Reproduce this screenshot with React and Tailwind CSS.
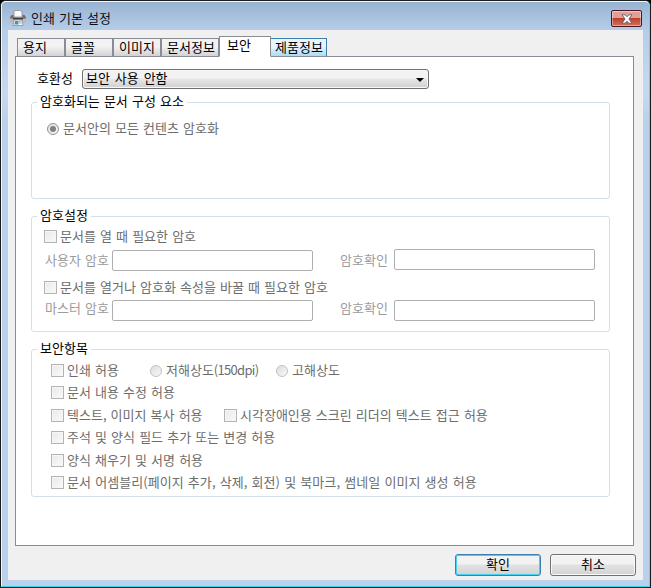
import { useState } from 'react';
import clsx from 'clsx';

const TABS = [
  { label: '용지', width: 'w-[48px]' },
  { label: '글꼴', width: 'w-[48px]' },
  { label: '이미지', width: 'w-[48px]' },
  { label: '문서정보', width: 'w-[58px]' },
  { label: '보안', width: 'w-[52px]' },
  { label: '제품정보', width: 'w-[57px]' },
];

function PrinterIcon() {
  return (
    <svg width="16" height="16" viewBox="0 0 16 16">
      <path d="M4.500 .5h6l1.500 1.500V7H4V.5z" fill="#fafafa" stroke="#8b8b8b" strokeWidth=".8" />
      <path d="M1.500 5h2v2.500h9V5h2L16 7.500v3H0v-3z" fill="#6c6c6c" />
      <path d="M0 8.500h16v4H0z" fill="#b9b9b9" />
      <path d="M3 8h10v1.500H3z" fill="#3c3c3c" />
      <path d="M4 10h8l1 5.500H3z" fill="#f9f9f9" stroke="#858585" strokeWidth=".7" />
      <path d="M5 11h3.500v3.500H4.500z" fill="#4b93ab" />
      <path d="M9 11.500h2.500M9 13h2.700" stroke="#7fa7b5" strokeWidth=".8" />
    </svg>
  );
}

function CloseButton() {
  return (
    <button
      type="button"
      className="flex h-[17px] w-[31px] items-center justify-center rounded-[2px] border border-[#4b1620] bg-linear-to-b from-[#dfa097] from-45% via-[#bc3f2b] via-50% to-[#d4705e] shadow-[inset_0_0_0_1px_rgba(255,255,255,0.4)]"
    >
      <svg width="12" height="10" viewBox="0 0 12 10">
        <path
          d="M1 .8h3.200L6 2.800 7.800.8H11L7.900 5 11 9.200H7.800L6 7.200 4.200 9.200H1L4.100 5z"
          fill="#fff"
          stroke="#5c5f70"
          strokeWidth=".9"
        />
      </svg>
    </button>
  );
}

function Group({ title, className, children }) {
  return (
    <section className={clsx('w-[579px] rounded-[3px] border border-[#d5dfe5]', className)}>
      <h2 className="-mt-[9px] ml-[5px] h-4 w-fit bg-white px-[3px] leading-[14px] text-black">{title}</h2>
      {children}
    </section>
  );
}

function Check({ label, className }) {
  return (
    <label className={clsx('flex h-[13px] items-center gap-[3px] text-[#6d6d6d]', className)}>
      <span className="size-[13px] shrink-0 border border-[#b4b4b4] bg-linear-to-br from-[#e9e9e9] to-[#fafafa] shadow-[inset_0_0_0_1px_#f6f6f6]" />
      <span className="-mt-[2px]">{label}</span>
    </label>
  );
}

function Radio({ label, checked, className }) {
  return (
    <label className={clsx('flex h-[13px] items-center gap-1 text-[#6d6d6d]', className)}>
      <span
        className={clsx(
          'flex size-[12px] shrink-0 items-center justify-center rounded-full border bg-linear-to-br from-[#dedede] to-[#f8f8f8]',
          checked ? 'border-[#929292]' : 'border-[#c2c2c2]'
        )}
      >
        {checked && <span className="size-[6px] rounded-full bg-[#808080]" />}
      </span>
      <span className="-mt-[2px]">{label}</span>
    </label>
  );
}

function Field({ className }) {
  return <input disabled className={clsx('h-[21px] w-[201px] rounded-[2px] border border-[#afafaf] bg-white', className)} />;
}

function Button({ primary, children }) {
  return (
    <button
      type="button"
      className={clsx(
        'h-[22px] w-[86px] rounded-[3px] border bg-linear-to-b from-[#f2f2f2] from-45% via-[#e2e2e2] via-50% to-[#d2d2d2] pb-[2px] leading-[18px] text-black',
        primary
          ? 'border-[#3c7fb1] shadow-[inset_0_0_0_1px_#46d0f3]'
          : 'border-[#707070] shadow-[inset_0_0_0_1px_#fafafa]'
      )}
    >
      {children}
    </button>
  );
}

export default function App() {
  const [tab, setTab] = useState('보안');

  return (
    <div className="h-[588px] w-[651px] overflow-hidden bg-black font-['Noto_Sans_CJK_KR',sans-serif] text-[13px] leading-[13px] font-normal whitespace-nowrap [word-spacing:1.2px]">
      <div className="h-[588px] w-[651px] rounded-t-[6px] border border-[#1c1c1c] bg-[#b9d1ea]">
        <div className="flex h-[586px] flex-col rounded-t-[5px] border border-t-[#f4f8fc] border-r-[#4fdcf5] border-b-[#35d3ee] border-l-[#eef5fb] bg-[linear-gradient(180deg,#98b3d2_0px,#b5cde8_28px,#c5daee_90px,#b9d1ea_120px)] px-[6px] pb-[6px]">
          {/* Title bar */}
          <header className="flex h-[28px] shrink-0 items-center pt-[5px]">
            <span className="-mt-[2px] ml-[2px]"><PrinterIcon /></span>
            <h1 className="-mt-[2px] ml-[5px] text-[#0c1016]">인쇄 기본 설정</h1>
            <div className="mr-[1px] ml-auto"><CloseButton /></div>
          </header>

          <main className="flex-1 bg-[#f0f0f0]">
            {/* Tabs */}
            <nav className="flex h-[26px] items-end pl-[9px]">
              {TABS.map((t) => (
                <button
                  key={t.label}
                  type="button"
                  onClick={() => setTab(t.label)}
                  className={clsx(
                    'shrink-0 border text-left text-black',
                    t.width,
                    tab === t.label
                      ? 'relative -mr-px -mb-px h-[21px] border-[#898c95] border-b-white bg-white pb-[4px] pl-[7px]'
                      : 'h-[18px] border-b-0 pb-[2px]',
                    tab !== t.label &&
                      (t.label === '제품정보'
                        ? 'border-[#3c7fb1] bg-linear-to-b from-[#e8f5fc] from-45% to-[#a9dbf5] pl-[4px]'
                        : 'border-[#898c95] bg-linear-to-b from-[#f2f2f2] from-45% to-[#d2d2d2] pl-[5px]')
                  )}
                >
                  {t.label}
                </button>
              ))}
            </nav>

            {/* Security page */}
            <div className="ml-[7px] h-[490px] w-[619px] border border-[#898c95] bg-white pt-[12px] pl-[15px]">
              <div className="flex h-[20px] items-center pl-[6px] text-black">
                <span className="-mt-[3px] w-[45px]">호환성</span>
                <button
                  type="button"
                  className="flex h-[20px] w-[347px] items-center justify-between rounded-[3px] border border-[#707070] bg-linear-to-b from-[#f2f2f2] from-45% via-[#e6e6e6] via-50% to-[#d0d0d0] pr-[4px] pl-[3px] shadow-[inset_0_0_0_1px_#f8f8f8]"
                >
                  <span className="-mt-[3px] [word-spacing:2px]">보안 사용 안함</span>
                  <svg width="8" height="4" viewBox="0 0 8 4" className="mt-[1px]">
                    <path d="M0 0h8L4 4z" fill="#000" />
                  </svg>
                </button>
              </div>

              <Group title="암호화되는 문서 구성 요소" className="mt-[13px] h-[97px]">
                <Radio label="문서안의 모든 컨텐츠 암호화" checked className="mt-[12px] ml-[15px]" />
              </Group>

              <Group title="암호설정" className="mt-[17px] h-[116px] text-[#9c9c9c]">
                <Check label="문서를 열 때 필요한 암호" className="mt-[6px] ml-[12px]" />
                <div className="mt-[6px] ml-[13px] flex h-[22px] items-center">
                  <span className="-mt-[2px] w-[67px]">사용자 암호</span>
                  <Field className="mt-[1px]" />
                  <span className="-mt-[2px] ml-[27px] w-[54px]">암호확인</span>
                  <Field className="-mt-[1px]" />
                </div>
                <Check label="문서를 열거나 암호화 속성을 바꿀 때 필요한 암호" className="mt-[10px] ml-[12px]" />
                <div className="mt-[6px] ml-[13px] flex h-[21px]">
                  <span className="mt-[1px] w-[67px]">마스터 암호</span>
                  <Field />
                  <span className="mt-[1px] ml-[27px] w-[54px]">암호확인</span>
                  <Field />
                </div>
              </Group>

              <Group title="보안항목" className="mt-[17px] h-[148px]">
                <div className="mt-[7px] ml-[19px] flex h-[125px] flex-col justify-between">
                  <div className="flex">
                    <Check label="인쇄 허용" className="w-[99px]" />
                    <Radio
                      label={<>저해상도<span className="tracking-[-0.7px]">(150dpi)</span></>}
                      className="w-[126px]"
                    />
                    <Radio label="고해상도" />
                  </div>
                  <Check label="문서 내용 수정 허용" />
                  <div className="flex">
                    <Check label="텍스트, 이미지 복사 허용" className="w-[173px]" />
                    <Check label="시각장애인용 스크린 리더의 텍스트 접근 허용" />
                  </div>
                  <Check label="주석 및 양식 필드 추가 또는 변경 허용" />
                  <Check label="양식 채우기 및 서명 허용" />
                  <Check
                    label="문서 어셈블리(페이지 추가, 삭제, 회전) 및 북마크, 썸네일 이미지 생성 허용"
                    className="tracking-[0.05px]"
                  />
                </div>
              </Group>
            </div>

            <footer className="mt-[8px] flex justify-end gap-[9px] pr-[7px]">
              <Button primary>확인</Button>
              <Button>취소</Button>
            </footer>
          </main>
        </div>
      </div>
    </div>
  );
}
